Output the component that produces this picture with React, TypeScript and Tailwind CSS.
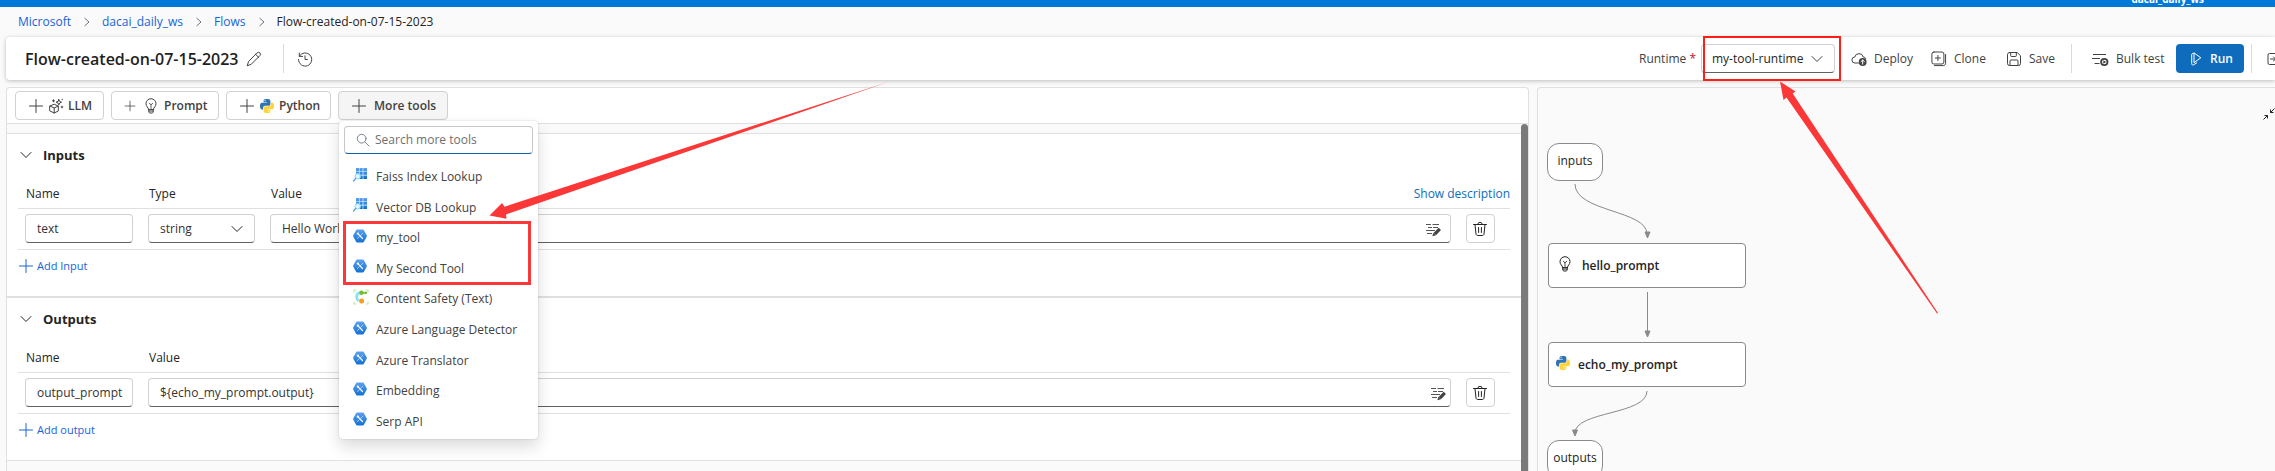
import React from "react";

type IconProps = { className?: string };

const Stroke = ({ className = "size-4", children }: IconProps & { children: React.ReactNode }) => (
  <svg
    viewBox="0 0 16 16"
    className={"shrink-0 " + className}
    fill="none"
    stroke="currentColor"
    strokeWidth="1"
    strokeLinecap="round"
    strokeLinejoin="round"
    aria-hidden="true"
  >
    {children}
  </svg>
);

const ChevronRight = () => (
  <svg viewBox="0 0 31 12" className="h-3 w-[31px] shrink-0 text-gray-500" fill="none" stroke="currentColor" aria-hidden="true">
    <path d="M13.5 2l4.500 4-4.500 4" />
  </svg>
);

const ChevronDown = ({ className = "size-4" }: IconProps) => (
  <Stroke className={className}>
    <path d="M3 5.500l5 5 5-5" />
  </Stroke>
);

const Plus = ({ className = "size-4" }: IconProps) => (
  <Stroke className={className}>
    <path d="M8 1.500v13M1.500 8h13" />
  </Stroke>
);

const Pencil = () => (
  <Stroke className="size-4">
    <path d="M11 1.900a1.900 1.900 0 0 1 2.900 2.700L5.200 13.300 1.200 14.800l1.300-4zM9.600 3.300l3 3" />
  </Stroke>
);

const History = () => (
  <Stroke className="size-4">
    <path d="M2.300 2v3.400h3.400M2.400 5.200A6.600 6.600 0 1 1 1.500 8.500M8 4.800v3.700h2.400" />
  </Stroke>
);

const Sparkle = () => (
  <Stroke className="size-4">
    <path d="M2 8l4.200-1.800L10.300 8v5L6.200 15 2 13zM2 8l4.200 2 4.100-2M6.200 10v5" />
    <path d="M10.800 1.500l.8 1.900 1.900.8-1.900.8-.8 1.900-.8-1.900-1.900-.8 1.900-.8z" />
    <path d="M5.500 1.800v2M4.500 2.800h2M14 8.200v1.600M13.200 9h1.600M14.200 1.200v.6" />
  </Stroke>
);

const Bulb = ({ className = "size-4" }: IconProps) => (
  <Stroke className={className}>
    <path d="M5.600 11.200C5.300 9.400 3 8.500 3 5.700a5 5 0 0 1 10 0c0 2.800-2.300 3.700-2.600 5.500zM5.600 11.200l.4 3c.1.500.4.800.9.800h2.200c.5 0 .8-.3.9-.8l.4-3M5.800 13h4.400" />
    <path d="M8 11V6.500M6.200 5.200l1.800 1.600 1.800-1.600" strokeWidth=".8" />
  </Stroke>
);

const Python = ({ className = "size-[14px]" }: IconProps) => (
  <svg viewBox="0 0 24 24" className={"shrink-0 " + className} aria-hidden="true">
    <path
      fill="#2f74b3"
      d="M14.25.18l.9.2.73.26.59.3.45.32.34.34.25.34.16.33.1.3.04.26.02.2-.01.13V8.5l-.05.63-.13.55-.21.46-.26.38-.3.31-.33.25-.35.19-.35.14-.33.1-.3.07-.26.04-.21.02H8.77l-.69.05-.59.14-.5.22-.41.27-.33.32-.27.35-.2.36-.15.37-.1.35-.07.32-.04.27-.02.21v3.06H3.17l-.21-.03-.28-.07-.32-.12-.35-.18-.36-.26-.36-.36-.35-.46-.32-.59-.28-.73-.21-.88-.14-1.05-.05-1.23.06-1.22.16-1.04.24-.87.32-.71.36-.57.4-.44.42-.33.42-.24.4-.16.36-.1.32-.05.24-.01h.16l.06.01h8.16v-.83H6.18l-.01-2.75-.02-.37.05-.34.11-.31.17-.28.25-.26.31-.23.38-.2.44-.18.51-.15.58-.12.64-.1.71-.06.77-.04.84-.02 1.27.05zm-6.3 1.98l-.23.33-.08.41.08.41.23.34.33.22.41.09.41-.09.33-.22.23-.34.08-.41-.08-.41-.23-.33-.33-.22-.41-.09-.41.09z"
    />
    <path
      fill="#ffd43b"
      d="M21.04 6.11l.28.06.32.12.35.18.36.27.36.35.35.47.32.59.28.73.21.88.14 1.04.05 1.23-.06 1.23-.16 1.04-.24.86-.32.71-.36.57-.4.45-.42.33-.42.24-.4.16-.36.09-.32.05-.24.02-.16-.01h-8.22v.82h5.84l.01 2.76.02.36-.05.34-.11.31-.17.29-.25.25-.31.24-.38.2-.44.17-.51.15-.58.13-.64.09-.71.07-.77.04-.84.01-1.27-.04-1.07-.14-.9-.2-.73-.25-.59-.3-.45-.33-.34-.34-.25-.34-.16-.33-.1-.3-.04-.25-.02-.2.01-.13v-5.34l.05-.64.13-.54.21-.46.26-.38.3-.32.33-.24.35-.2.35-.14.33-.1.3-.06.26-.04.21-.02.13-.01h5.84l.69-.05.59-.14.5-.21.41-.28.33-.32.27-.35.2-.36.15-.36.1-.35.07-.32.04-.28.02-.21V6.07h2.09l.14.01zm-6.47 14.25l-.23.33-.08.41.08.41.23.33.33.23.41.08.41-.08.33-.23.23-.33.08-.41-.08-.41-.23-.33-.33-.23-.41-.08-.41.08z"
    />
  </svg>
);

const CloudUp = () => (
  <Stroke className="size-4">
    <path d="M7.500 12H4a3 3 0 0 1-.2-6A4.300 4.300 0 0 1 12.200 6c1.200.1 2.200.7 2.600 1.600" />
    <circle cx="11.700" cy="11" r="3.900" fill="currentColor" stroke="none" />
    <path d="M11.700 13.200V9M10 10.600L11.700 9l1.700 1.600" stroke="#fff" />
  </Stroke>
);

const CloneIcon = () => (
  <Stroke className="size-4">
    <rect x=".9" y="1" width="12" height="12" rx="2" />
    <path d="M6.900 4.500v5M4.400 7h5M14.600 3.500v8.700c0 1.500-.9 2.400-2.400 2.400H3.500" />
  </Stroke>
);

const SaveIcon = () => (
  <Stroke className="size-4">
    <path d="M3.500 1.500h7.700L14.500 4.700v7.800a2 2 0 0 1-2 2h-9a2 2 0 0 1-2-2v-9a2 2 0 0 1 2-2z" />
    <path d="M4.700 1.500v3.300c0 .5.300.7.700.7h4.200c.5 0 .7-.3.700-.7V1.500M4 14.500V10c0-.6.400-1 1-1h6c.6 0 1 .4 1 1v4.500" />
  </Stroke>
);

const BulkIcon = () => (
  <svg viewBox="0 0 17 16" className="h-4 w-[17px] shrink-0" fill="none" stroke="currentColor" aria-hidden="true">
    <path d="M1 3.500h13M0 7.500h8M2.500 12.500h5" />
    <circle cx="12.300" cy="11" r="3.200" strokeWidth="1.800" />
    <path d="M11.300 9.300l3 1.700-3 1.700z" fill="currentColor" stroke="none" />
  </svg>
);

const RunIcon = () => (
  <Stroke className="size-4">
    <path d="M6 2.300v9.400l6.500-4.700zM6 2.300c-1.200-.4-2.300.2-2.300 1.600v8.600c0 1.400 1 1.900 2 1.300l3-2" />
  </Stroke>
);

const PanelIcon = () => (
  <Stroke className="size-4">
    <path d="M14 2.500H2.500a1.500 1.500 0 0 0-1.500 1.500v8a1.500 1.500 0 0 0 1.500 1.500H14M3.500 8h5M6.500 6l2 2-2 2" />
  </Stroke>
);

const Trash = () => (
  <Stroke className="size-4">
    <path d="M1.500 3.500h13M5.800 3.300a2.200 2 0 0 1 4.400 0M3 3.700l1 9.300c.1.900.8 1.500 1.700 1.500h4.600c.9 0 1.600-.6 1.700-1.500l1-9.300M6.600 6.500v5M9.400 6.500v5" />
  </Stroke>
);

const EditLines = () => (
  <svg viewBox="0 0 16 14" className="h-[14px] w-4" fill="none" stroke="currentColor" aria-hidden="true">
    <path d="M1 1.500h5M7.500 1.500H14M3 4.500h4M8 4.500h5M1 7.500h9M2 10.500h5" strokeWidth=".9" />
    <path d="M14.800 5.800L9.800 11.200" strokeWidth="3.200" />
    <path d="M8.300 9.800l2.600 2.500-3.500 1z" fill="currentColor" stroke="none" />
  </svg>
);

const SearchIcon = () => (
  <Stroke className="size-[14px] text-gray-500">
    <circle cx="6.500" cy="6.500" r="5" />
    <path d="M10.200 10.200l4.800 4.800" />
  </Stroke>
);

const IndexIcon = () => (
  <svg viewBox="0 0 14 14" className="size-[14px] shrink-0" aria-hidden="true">
    <defs>
      <linearGradient id="idx" x1="0" y1="0" x2="0" y2="1">
        <stop offset="0" stopColor="#5ea0ef" />
        <stop offset="1" stopColor="#0f6fcc" />
      </linearGradient>
    </defs>
    <path
      fill="url(#idx)"
      d="M3 0h3v3H3zM6.500 0h3.200v3H6.500zM10.300 0H14v3h-3.700zM3 3.600h3v3.200H3zM6.500 3.600h3.200v3.200H6.500zM10.300 3.600H14v3.200h-3.700zM6.500 7.500h3.200V11H6.500zM10.300 7.500H14V11h-3.700z"
    />
    <circle cx="4.700" cy="8.300" r="2.700" fill="#d9f6ff" stroke="#7adcf7" />
    <path d="M2.700 10.500L.5 13" stroke="#5ea0ef" strokeWidth="1.400" strokeLinecap="round" />
  </svg>
);

const ToolIcon = () => (
  <svg viewBox="0 0 14 14" className="size-[14px] shrink-0" aria-hidden="true">
    <defs>
      <linearGradient id="hex" x1="0" y1="0" x2="0" y2="1">
        <stop offset="0" stopColor="#5ea0ef" />
        <stop offset="1" stopColor="#1272d3" />
      </linearGradient>
    </defs>
    <path
      d="M4.200.6h5.600c.5 0 .9.200 1.100.6l2.800 5c.3.500.3 1 0 1.500l-2.800 5c-.2.400-.6.700-1.100.7H4.200c-.5 0-.9-.3-1.100-.7l-2.800-5c-.3-.5-.3-1 0-1.500l2.800-5c.2-.4.600-.6 1.100-.6z"
      fill="url(#hex)"
    />
    <path d="M9.600 4.400L7.600 6.400M6.200 7.700L4.500 9.500" stroke="#a9d0f8" strokeWidth="1" strokeLinecap="round" />
    <path d="M4.800 4.600l4.700 4.900" stroke="#fff" strokeWidth="1.200" strokeLinecap="round" />
    <circle cx="4.800" cy="4.600" r="1.100" fill="#fff" />
  </svg>
);

const SafetyIcon = () => (
  <svg viewBox="0 0 16 16" className="size-4 shrink-0" fill="none" aria-hidden="true">
    <path d="M1 3.500V1h2.500M12.500 1H15v2.500M1 12.500V15h2.500M12.500 15H15v-2.500" stroke="#c5e8a8" strokeWidth="1.200" />
    <path d="M8.500 3.500C5.500 3.500 3.600 5.300 3.600 8.200c0 1.800.8 2.800 2 3.600" stroke="#86e4fa" strokeWidth="2.800" />
    <path d="M8.500 3.800h5" stroke="#76bc2d" strokeWidth="1.500" />
    <circle cx="8.500" cy="3.800" r="2.200" fill="#76bc2d" />
    <circle cx="12.700" cy="3.800" r="1.300" fill="#76bc2d" />
    <circle cx="8.600" cy="12" r="2.500" fill="#ff9a1f" />
  </svg>
);

const CollapseIcon = () => (
  <svg viewBox="0 0 12 12" className="size-3" fill="none" stroke="currentColor" aria-hidden="true">
    <path d="M11.500.5L7.500 4.500M7.500 1.500v3h3M.5 11.500l4-4M1.500 7.500h3v3" />
  </svg>
);

const crumbs = ["Microsoft", "dacai_daily_ws", "Flows"];

const tools = [
  { name: "Faiss Index Lookup", icon: <IndexIcon /> },
  { name: "Vector DB Lookup", icon: <IndexIcon /> },
  { name: "my_tool", icon: <ToolIcon /> },
  { name: "My Second Tool", icon: <ToolIcon /> },
  { name: "Content Safety (Text)", icon: <SafetyIcon /> },
  { name: "Azure Language Detector", icon: <ToolIcon /> },
  { name: "Azure Translator", icon: <ToolIcon /> },
  { name: "Embedding", icon: <ToolIcon /> },
  { name: "Serp API", icon: <ToolIcon /> },
];

const field =
  "h-[29px] w-full rounded border border-[#d1d1d1] border-b-[#616161] bg-white pr-2 pl-[11px] text-xs text-[#333333] outline-none";
const toolButton =
  "flex h-[29px] items-center rounded border border-[#d1d1d1] text-xs font-semibold text-[#424242]";
const commandButton = "flex items-center gap-[7px] whitespace-nowrap text-xs font-medium text-[#424242]";
const headCell = "border-b border-[#e0e0e0] pt-2 pb-1 pl-2 text-left text-xs leading-5 font-medium";
const bodyCell = "border-b border-[#e0e0e0] pt-[5px] pr-2 pb-[6px] pl-[7px]";

function DeleteButton() {
  return (
    <button aria-label="Delete" className="flex size-[29px] items-center justify-center rounded border border-[#d1d1d1] bg-white">
      <Trash />
    </button>
  );
}

function ValueField({ label, value, iconInset }: { label: string; value: string; iconInset: string }) {
  return (
    <div className="relative">
      <input aria-label={label} defaultValue={value} className={field} />
      <button aria-label="Edit value" className={"absolute top-[9px] text-[#424242] " + iconInset}>
        <EditLines />
      </button>
    </div>
  );
}

function Section({ title, addLabel, className, children }: { title: string; addLabel: string; className: string; children: React.ReactNode }) {
  return (
    <section className={"bg-white pt-[11px] pr-[11px] pb-5 pl-[11px] " + className}>
      <button className="flex items-center gap-[9px] text-[13px] leading-5 font-bold">
        <ChevronDown className="size-4" />
        {title}
      </button>
      <table className="mt-[11px] w-full table-fixed border-separate border-spacing-0">{children}</table>
      <button className="mt-[6px] flex h-5 items-center gap-[3px] text-[11px] text-[#1664d9]">
        <Plus className="size-4" />
        {addLabel}
      </button>
    </section>
  );
}

function MoreTools() {
  return (
    <div className="relative">
      <button className={toolButton + " w-[110px] gap-[7px] bg-[#f5f5f5] pl-3"} aria-expanded="true">
        <Plus />
        More tools
      </button>
      <div className="absolute top-full left-px z-20 mt-px w-[199px] rounded bg-white px-[5px] pt-[5px] pb-0.5 shadow-[0_0_2px_rgba(0,0,0,0.2),0_8px_16px_rgba(0,0,0,0.14)]">
        <label className="flex h-7 items-center gap-[5px] rounded-sm border border-[#c7c7c7] border-b-[#0f5ea8] pl-[11px]">
          <SearchIcon />
          <input placeholder="Search more tools" aria-label="Search more tools" className="w-full min-w-0 bg-transparent text-xs outline-none placeholder:text-[#707070]" />
        </label>
        <ul className="mt-2 grid min-h-[275px] auto-rows-fr">
          {tools.map((tool) => (
            <li key={tool.name} className="flex">
              <button className="flex w-full items-center pl-[9px] text-left text-xs whitespace-nowrap text-[#424242]">
                <span className="flex w-[23px] justify-start pb-[5px]">{tool.icon}</span>
                {tool.name}
              </button>
            </li>
          ))}
        </ul>
        <div className="pointer-events-none absolute top-[100px] left-1 h-16 w-[188px] border-[3px] border-[#fb3737]" />
        <svg viewBox="0 0 400 138" className="pointer-events-none absolute top-[-40px] left-[150px] h-[138px] w-[400px]" aria-hidden="true">
          <path d="M.5 134.500L13 122l2.500 3.700L399 1 17 133.500l.5 4.200z" fill="#fb3737" />
        </svg>
      </div>
    </div>
  );
}

function Header() {
  return (
    <header className="relative z-10 ml-[6px] flex h-[43px] items-center rounded-l bg-white pl-[19px] text-[#424242] shadow-[0_1px_4px_rgba(0,0,0,0.25)]">
      <h1 className="text-base font-semibold whitespace-nowrap text-[#1f1f1f]">Flow-created-on-07-15-2023</h1>
      <button aria-label="Rename" className="ml-[7px]"><Pencil /></button>
      <span className="ml-[21px] h-[29px] w-px bg-[#d9d9d9]" />
      <button aria-label="History" className="ml-[13px]"><History /></button>

      <div className="-mr-2 ml-auto flex items-center">
        <label htmlFor="runtime" className="text-xs whitespace-nowrap">
          Runtime <span className="text-[#c50f1f]">*</span>
        </label>
        <div className="relative ml-[5px] w-[134px]">
          <select
            id="runtime"
            className="h-[29px] w-full appearance-none rounded border border-[#d1d1d1] border-b-[#616161] bg-white pl-[10px] text-xs text-[#242424]"
          >
            <option>my-tool-runtime</option>
          </select>
          <ChevronDown className="pointer-events-none absolute top-[7px] right-[10px] size-4" />
          <div className="pointer-events-none absolute -top-2 left-0.5 h-[45px] w-[138px] border-2 border-[#ff1f14]" />
          <svg viewBox="0 0 160 234" className="pointer-events-none absolute top-[37px] left-[78px] h-[234px] w-[160px]" aria-hidden="true">
            <path d="M1 .5l15.500 10-2.800 2L159 232l-1 .6L7.500 16.500l-3 2.500z" fill="#fb3737" />
          </svg>
        </div>
        <button className={commandButton + " ml-4 w-20"}><CloudUp />Deploy</button>
        <button className={commandButton + " w-[75px]"}><CloneIcon />Clone</button>
        <button className={commandButton + " w-[65px]"}><SaveIcon />Save</button>
        <span className="h-[29px] w-px bg-[#d9d9d9]" />
        <button className={commandButton + " ml-5 w-[84px]"}><BulkIcon />Bulk test</button>
        <button className="flex h-[29px] w-[68px] items-center gap-[6px] rounded bg-[#0f6cbd] pl-3 text-xs font-semibold text-white">
          <RunIcon />
          Run
        </button>
        <span className="ml-[7px] h-[29px] w-px bg-[#d9d9d9]" />
        <button aria-label="Open panel" className="ml-[15px]"><PanelIcon /></button>
      </div>
    </header>
  );
}

function Editor() {
  return (
    <main className="flex min-w-0 flex-[1523] flex-col rounded-t border border-b-0 border-[#e0e0e0]">
      <div className="flex gap-[7px] rounded-t border-b border-[#e0e0e0] bg-white pt-[3px] pb-[3px] pl-2">
        <button className={toolButton + " w-[89px] gap-1 pl-3"}><Plus /><Sparkle />LLM</button>
        <button className={toolButton + " w-[108px] gap-[5px] pl-3"}><Plus className="mr-0.5 size-3" /><Bulb />Prompt</button>
        <button className={toolButton + " w-[105px] gap-[5px] pl-3"}><Plus /><Python />Python</button>
        <MoreTools />
      </div>
      <div className="flex flex-1">
        <div className="min-w-0 flex-1">
          <div className="h-[10px] border-b border-[#e0e0e0]" />
          <Section title="Inputs" addLabel="Add Input" className="border-b-2 border-[#e0e0e0]">
            <colgroup>
              <col className="w-[123px]" />
              <col className="w-[122px]" />
              <col />
              <col className="w-[51px]" />
            </colgroup>
            <thead>
              <tr>
                <th className={headCell}>Name</th>
                <th className={headCell}>Type</th>
                <th className={headCell} colSpan={2}>
                  <div className="flex justify-between">
                    Value
                    <button className="font-normal text-[#0f6cbd]">Show description</button>
                  </div>
                </th>
              </tr>
            </thead>
            <tbody>
              <tr>
                <td className={bodyCell}><input aria-label="Input name" defaultValue="text" className={field} /></td>
                <td className={bodyCell}>
                  <div className="relative">
                    <select aria-label="Input type" className={field + " appearance-none"}>
                      <option>string</option>
                    </select>
                    <ChevronDown className="pointer-events-none absolute top-[7px] right-[10px] size-4" />
                  </div>
                </td>
                <td className={bodyCell}><ValueField label="Input value" value="Hello World" iconInset="right-[10px]" /></td>
                <td className={bodyCell}><DeleteButton /></td>
              </tr>
            </tbody>
          </Section>
          <Section title="Outputs" addLabel="Add output" className="border-b border-[#e0e0e0]">
            <colgroup>
              <col className="w-[123px]" />
              <col />
              <col className="w-[51px]" />
            </colgroup>
            <thead>
              <tr>
                <th className={headCell}>Name</th>
                <th className={headCell} colSpan={2}>Value</th>
              </tr>
            </thead>
            <tbody>
              <tr>
                <td className={bodyCell}><input aria-label="Output name" defaultValue="output_prompt" className={field} /></td>
                <td className={bodyCell}><ValueField label="Output value" value="${echo_my_prompt.output}" iconInset="right-[5px]" /></td>
                <td className={bodyCell}><DeleteButton /></td>
              </tr>
            </tbody>
          </Section>
        </div>
        <div className="w-[7px] rounded-t bg-[#7a7a7a]" />
      </div>
    </main>
  );
}

const terminal =
  "absolute left-[9px] flex h-[38px] w-14 justify-center rounded-[12px] border border-[#8a8a8a] bg-white pt-[7px] text-xs leading-5";
const node =
  "absolute left-[10px] flex h-[45px] w-[198px] items-center rounded border border-[#8a8a8a] bg-white pt-px text-xs font-semibold";

function Graph() {
  return (
    <aside className="relative flex-[738] rounded-tl border-t border-l border-[#e0e0e0]">
      <svg viewBox="0 0 220 384" className="absolute top-0 left-0 h-[384px] w-[220px]" fill="none" stroke="#8a8a8a" aria-hidden="true">
        <path d="M37 96c0 28 72 26 72 50M109.500 204v42M109 303c0 24-72 20-72 42" />
        <path d="M109.500 150l-2.500-6h5zM109.500 249l-2.500-6h5zM37 348l-2.500-6h5z" fill="#8a8a8a" />
      </svg>
      <div className={terminal + " top-[55px]"}>inputs</div>
      <div className={node + " top-[155px]"}>
        <Bulb className="mb-1 ml-2 size-4" />
        <span className="ml-[9px]">hello_prompt</span>
      </div>
      <div className={node + " top-[254px]"}>
        <Python className="mb-1 ml-[7px] size-[14px]" />
        <span className="ml-2">echo_my_prompt</span>
      </div>
      <div className={terminal + " top-[352px]"}>outputs</div>
      <button aria-label="Fit to view" className="absolute top-5 right-0">
        <CollapseIcon />
      </button>
    </aside>
  );
}

export default function App() {
  return (
    <div className="flex h-screen flex-col overflow-hidden bg-[#fafafa] font-['Open_Sans','Noto_Sans',sans-serif] text-[#242424]">
      <div className="flex h-[7px] shrink-0 items-end justify-end overflow-hidden bg-[#0078d7] pr-[71px]">
        <span className="text-[10px] leading-4 font-bold text-white">dacai_daily_ws</span>
      </div>
      <nav aria-label="Breadcrumb" className="flex h-[30px] shrink-0 items-center pl-[18px] text-xs">
        {crumbs.map((crumb) => (
          <React.Fragment key={crumb}>
            <a href="#" className="text-[#1664d9]">{crumb}</a>
            <ChevronRight />
          </React.Fragment>
        ))}
        <span>Flow-created-on-07-15-2023</span>
      </nav>
      <Header />
      <div className="mt-[7px] ml-[6px] flex flex-1 gap-2">
        <Editor />
        <Graph />
      </div>
    </div>
  );
}
